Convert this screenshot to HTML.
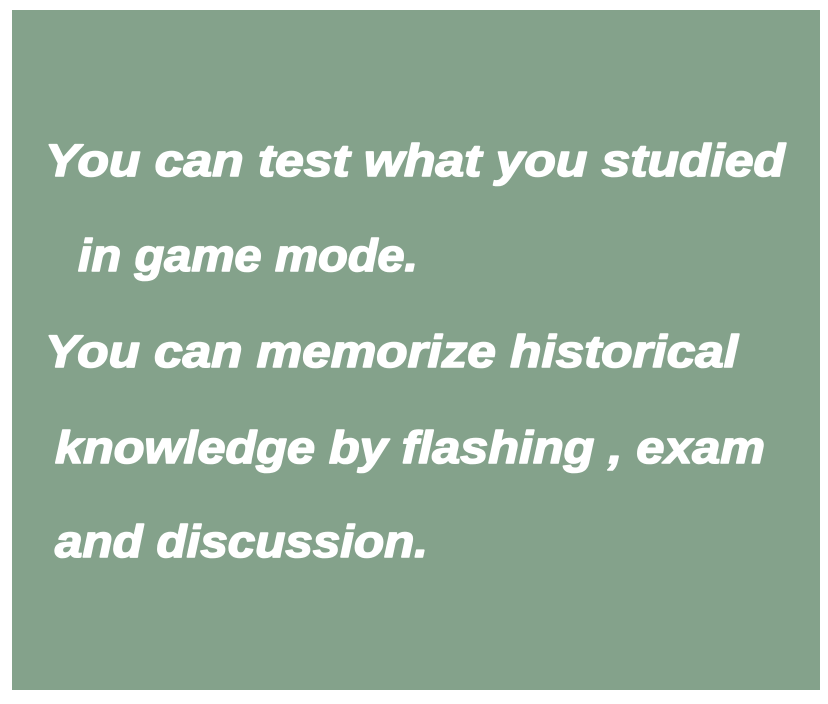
<!DOCTYPE html>
<html><head><meta charset="utf-8"><style>
html,body{margin:0;padding:0;background:#fff;width:828px;height:704px;overflow:hidden}
svg{display:block}
</style></head><body>
<svg width="828" height="704" viewBox="0 0 828 704" xmlns="http://www.w3.org/2000/svg">
<rect x="12" y="10" width="808" height="680" fill="#84a28b"/>
<g fill="#fff" stroke="#fff" stroke-width="1.6" stroke-linejoin="round" font-family="Liberation Sans, sans-serif" font-weight="bold" font-style="italic" font-size="45">
<text x="45" y="176" textLength="740" lengthAdjust="spacingAndGlyphs">You can test what you studied</text>
<text x="78" y="271" textLength="340" lengthAdjust="spacingAndGlyphs">in game mode.</text>
<text x="45" y="367" textLength="693" lengthAdjust="spacingAndGlyphs">You can memorize historical</text>
<text x="55" y="463" textLength="710" lengthAdjust="spacingAndGlyphs">knowledge by flashing , exam</text>
<text x="55" y="557" textLength="373" lengthAdjust="spacingAndGlyphs">and discussion.</text>
</g>
</svg>
</body></html>
